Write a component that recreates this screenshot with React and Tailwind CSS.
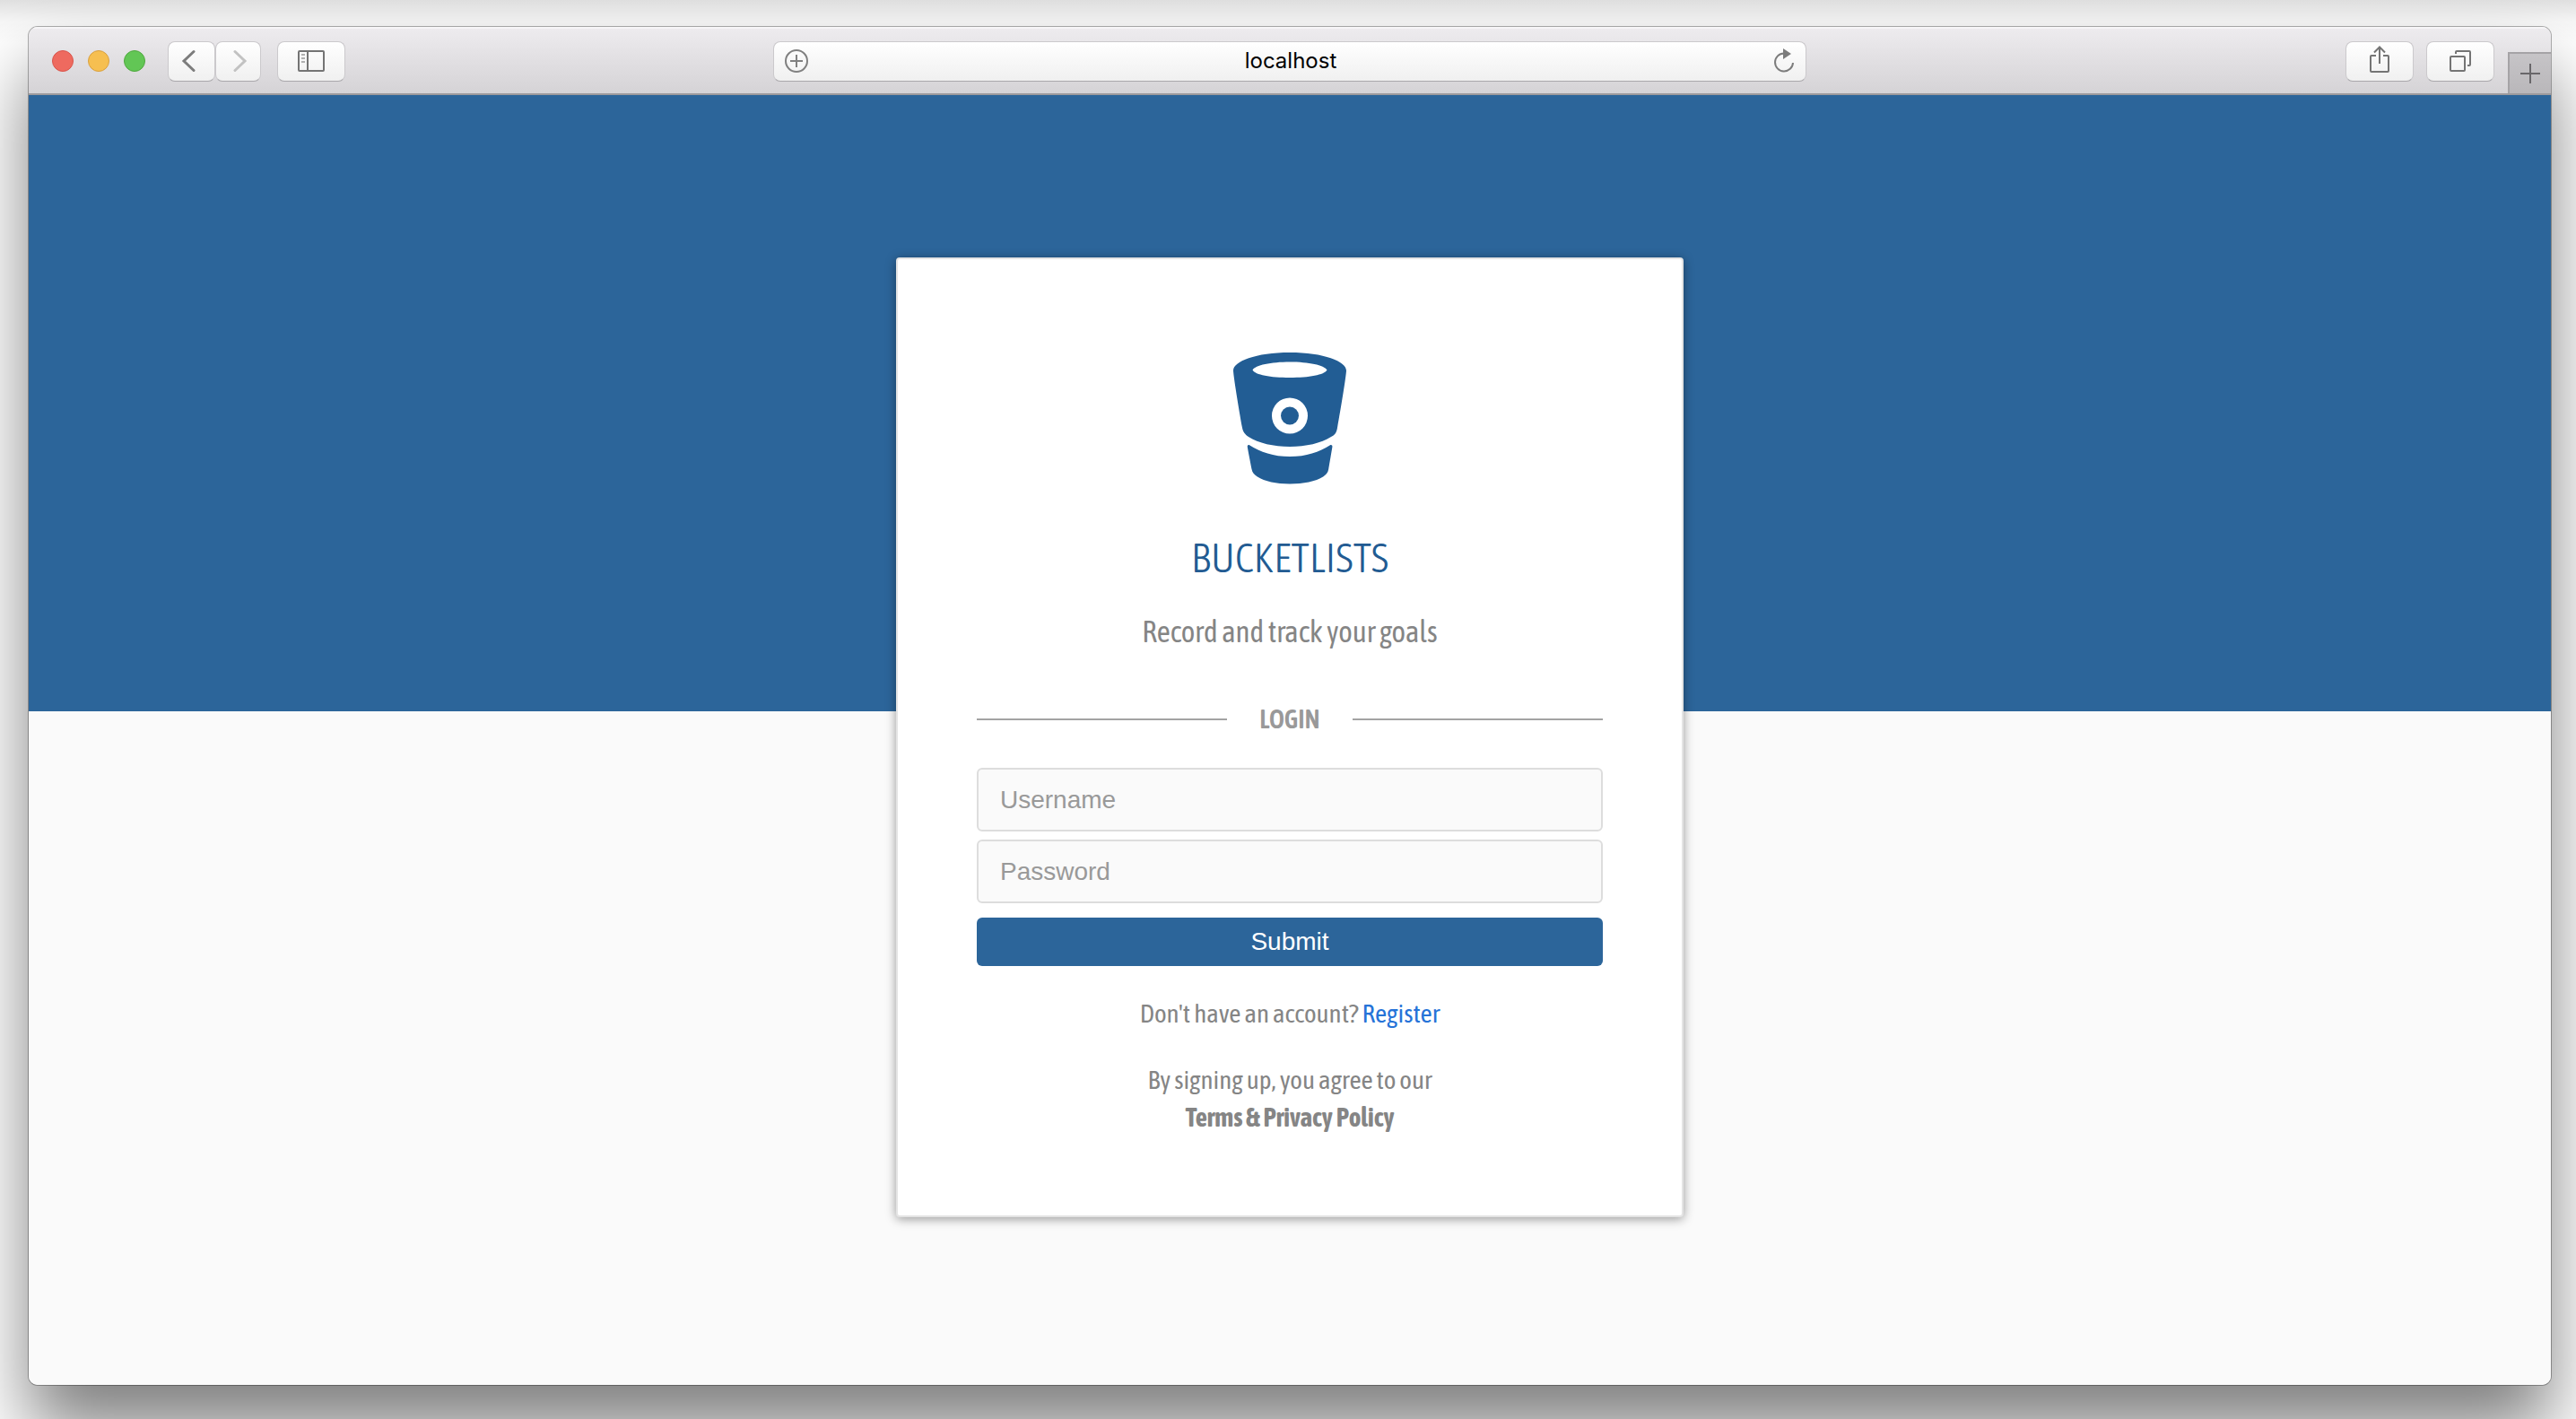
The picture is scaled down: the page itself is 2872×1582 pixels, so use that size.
import React from "react";

const toolButton =
  "flex h-[45px] items-center justify-center rounded-lg border border-[#cbc9cc] border-b-[#aaa8ab] bg-linear-to-b from-white to-[#f0f0f0] text-[#747474]";

const condensed =
  "font-['Asap_Condensed','Roboto_Condensed','Liberation_Sans_Narrow','Open_Sans',sans-serif]";

function Bucket() {
  return (
    <svg viewBox="0 0 126 147" className="h-[147px] w-[126px]" fill="#225d94" aria-hidden="true">
      <path
        fillRule="evenodd"
        d="M0 20C0 10 25 0 63 0s63 10 63 20c0 5-6 42-10 64-1 6-3 8-7 10-11 7-28 11-46 11s-35-4-46-11c-4-3-6-5-7-10C6 62 0 25 0 20ZM21.5 19.500c3 5.500 20 8.500 41.500 8.500s38.500-3 41.500-8.500C101.500 14 84 10.500 63 10.500S24.500 14 21.500 19.500ZM63 50.500a20 20 0 1 0 0 40 20 20 0 0 0 0-40Z"
      />
      <circle cx="63" cy="70.500" r="10" />
      <path d="M18 103.200C30 111 45 116 63 116s33-5 45-12.800c1.500-.8 2.600.3 2.400 2-.8 5-3.400 19.800-4.200 24.800-.7 4-2.600 6-5.700 8.300-9 5.700-22 8.200-37.500 8.200s-27.500-2.500-36.500-8.200c-3.300-2.300-5.200-4.300-6-8.300-1-5-3.900-19.800-4.700-24.800-.2-1.700.7-2.800 2.200-2Z" />
    </svg>
  );
}

function Toolbar() {
  return (
    <header className="grid h-[76px] shrink-0 grid-cols-[1fr_41%_1fr] items-center border-b-2 border-[#9c9a9d] bg-linear-to-b from-[#eeecef] to-[#d5d3d6] pt-0.5 shadow-[inset_0_2px_0_#f6f5f7]">
      <div className="flex items-center pl-[26px]">
        <div className="flex gap-4">
          <button aria-label="Close" className="size-6 rounded-full border border-[#d9554c] bg-[#ee6a5f]" />
          <button aria-label="Minimize" className="size-6 rounded-full border border-[#d9a040] bg-[#f6bf50]" />
          <button aria-label="Zoom" className="size-6 rounded-full border border-[#50a83f] bg-[#62c655]" />
        </div>
        <button aria-label="Back" className={`${toolButton} ml-[25px] w-[53px]`}>
          <svg viewBox="0 0 16 26" className="mr-2 h-[26px] w-4" fill="none" stroke="#7c7c7c" strokeWidth="3" strokeLinecap="round"><path d="M14 2.500 3 13l11 10.500" /></svg>
        </button>
        <button aria-label="Forward" className={`${toolButton} w-[51px]`}>
          <svg viewBox="0 0 16 26" className="ml-1 h-[26px] w-4" fill="none" stroke="#c2c2c2" strokeWidth="3" strokeLinecap="round"><path d="M2 2.500 13 13 2 23.500" /></svg>
        </button>
        <button aria-label="Show sidebar" className={`${toolButton} ml-[18px] w-[76px]`}>
          <svg viewBox="0 0 30 24" className="h-6 w-[30px]" fill="none" stroke="currentColor" strokeWidth="2">
            <rect x="1" y="1" width="28" height="22" rx="1" />
            <path d="M11 1v22" />
            <path d="M4 5h4M4 9h4M4 13h4" stroke="#999" strokeWidth="1.500" />
          </svg>
        </button>
      </div>

      <div className="flex h-[45px] items-center justify-between rounded-lg border border-[#cbc9cc] border-b-[#aaa8ab] bg-linear-to-b from-white to-[#f0f0f0] px-3">
        <button aria-label="Add bookmark">
          <svg viewBox="0 0 26 26" className="size-[26px]" fill="none" stroke="#808080" strokeWidth="2"><circle cx="13" cy="13" r="12" /><path d="M13 6v14M6 13h14" /></svg>
        </button>
        <input aria-label="Address" defaultValue="localhost" className="min-w-0 flex-1 bg-transparent text-center font-['Inter',sans-serif] text-2xl text-black outline-none" />
        <button aria-label="Reload">
          <svg viewBox="0 0 24 28" className="h-7 w-6"><path d="M12 5.500A10 10 0 1 0 22 16" fill="none" stroke="#7c7c7c" strokeWidth="2" /><path d="M11 0v12l9-6Z" fill="#7c7c7c" /></svg>
        </button>
      </div>

      <div className="flex h-full items-center justify-end">
        <button aria-label="Share" className={`${toolButton} w-[76px]`}>
          <svg viewBox="0 0 24 32" className="mb-1 h-8 w-6" fill="none" stroke="currentColor" strokeWidth="2"><path d="M8 12H3a1 1 0 0 0-1 1v16a1 1 0 0 0 1 1h18a1 1 0 0 0 1-1V13a1 1 0 0 0-1-1h-5" /><path d="M12 21V2M6 8.500 12 2.500l6 6" /></svg>
        </button>
        <button aria-label="Show all tabs" className={`${toolButton} ml-3.5 w-[76px]`}>
          <svg viewBox="0 0 24 24" className="size-6" fill="none" stroke="currentColor" strokeWidth="2"><rect x="1" y="7" width="16" height="16" rx="1" /><path d="M7 4V2a1 1 0 0 1 1-1h14a1 1 0 0 1 1 1v14a1 1 0 0 1-1 1h-2" /></svg>
        </button>
        <button aria-label="New tab" className="ml-[15px] flex h-[46px] w-12 items-center justify-center self-end border-t-2 border-l-2 border-[#a5a3a6] bg-linear-to-b from-[#c6c4c7] to-[#b9b7ba]">
          <svg viewBox="0 0 22 22" className="size-[22px]" stroke="#69676a" strokeWidth="2"><path d="M11 0v22M0 11h22" /></svg>
        </button>
      </div>
    </header>
  );
}

const field =
  "h-[71px] w-full rounded-md border-2 border-[#dddddd] bg-[#fafafa] px-6 font-['Liberation_Sans',Arial,sans-serif] text-[28px] text-[#333] outline-none placeholder:text-[#999] placeholder:opacity-100";

function LoginCard() {
  return (
    <section className={`flex w-[878px] max-w-full flex-col items-center self-start rounded-sm border-2 border-[#e4e4e4] bg-white px-[88px] pt-[104px] pb-[88px] text-[#858585] shadow-[0_2px_12px_rgba(0,0,0,0.4)] ${condensed}`}>
      <Bucket />
      <h1 className="mt-12 text-[46px] leading-[68px] font-light text-[#225b92]">BUCKETLISTS</h1>
      <p className="mt-6 text-[33px] leading-[48px]">Record and track your goals</p>
      <div className="mt-14 flex w-full items-center gap-9 text-[#999]">
        <hr className="flex-1 border-t-2 border-[#a3a3a3]" />
        <h2 className="text-[29px] leading-9 font-semibold">LOGIN</h2>
        <hr className="flex-1 border-t-2 border-[#a3a3a3]" />
      </div>
      <form className="mt-9 flex w-full flex-col gap-[9px]" onSubmit={(e) => e.preventDefault()}>
        <input type="text" aria-label="Username" placeholder="Username" className={field} />
        <input type="password" aria-label="Password" placeholder="Password" className={field} />
        <button type="submit" className="mt-[7px] h-[54px] rounded-md bg-[#2c659a] font-['Liberation_Sans',Arial,sans-serif] text-[28px] text-white">Submit</button>
      </form>
      <p className="mt-8 text-[29px] leading-[42px]">
        Don't have an account? <a href="#register" className="text-[#2673d8]">Register</a>
      </p>
      <p className="mt-8 text-center text-[29px] leading-[42px]">
        By signing up, you agree to our
        <br />
        <a href="#terms" className="font-bold">Terms &amp; Privacy Policy</a>
      </p>
    </section>
  );
}

export default function App() {
  return (
    <div className="flex min-h-screen overflow-hidden bg-white bg-[linear-gradient(rgba(0,0,0,0.12),rgba(0,0,0,0.03)_24px,transparent_48px)] pt-[30px] pr-7 pb-[38px] pl-8">
      <div className="flex flex-1 flex-col rounded-[10px] shadow-[0_0_0_1px_rgba(0,0,0,0.3),0_50px_80px_rgba(0,0,0,0.5)]">
        <div className="flex flex-1 flex-col overflow-hidden rounded-[10px]">
          <Toolbar />
          <main className="flex flex-1 justify-center bg-[linear-gradient(#2c659a_687px,#fafafa_687px)] pt-[181px] pb-20">
            <LoginCard />
          </main>
        </div>
      </div>
    </div>
  );
}
